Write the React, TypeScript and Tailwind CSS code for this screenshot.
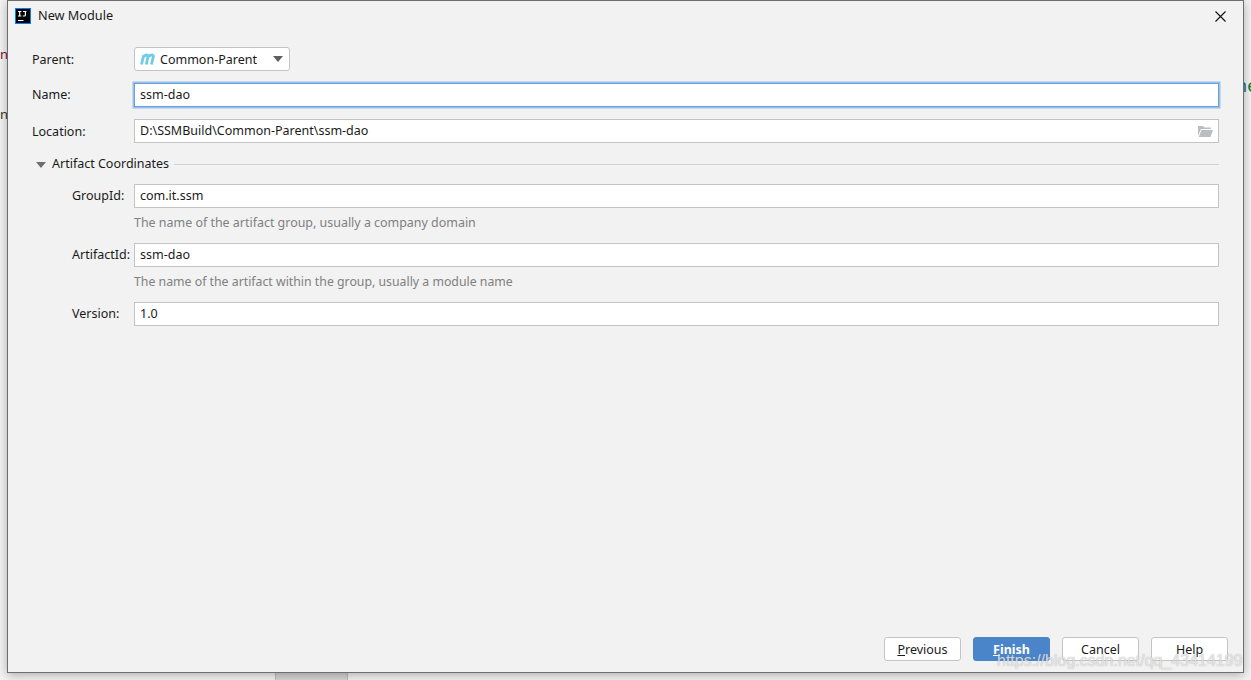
const font = "font-['Noto_Sans','Open_Sans',sans-serif]";

const Field = ({ value, children }: { value: string; children?: React.ReactNode }) => (
  <div className="flex h-6 flex-1 items-center justify-between border border-[#c4c4c4] bg-white pl-[5px] pr-[5px] text-[#1a1a1a]">
    <span>{value}</span>
    {children}
  </div>
);

const Button = ({ label, mnemonic, primary }: { label: string; mnemonic?: string; primary?: boolean }) => (
  <button
    className={
      primary
        ? "h-6 w-[77px] rounded-[3px] border border-[#4a85c5] bg-[#4a85c9] pt-[2px] text-[12.5px] font-bold text-white"
        : "h-6 w-[77px] rounded-[3px] border border-[#c4c4c4] bg-white pt-[2px] text-[12.5px] text-[#1a1a1a]"
    }
  >
    {mnemonic && <span className="underline">{mnemonic}</span>}
    {label}
  </button>
);

export default function App() {
  return (
    <div className={`relative h-[680px] w-[1251px] overflow-hidden bg-[#f4f4f4] ${font}`}>
      {/* IDE peeking out behind the dialog */}
      <span className="absolute left-0 top-[45px] text-[13px] text-[#7a1040]">n</span>
      <span className="absolute left-0 top-[105px] text-[13px] text-[#333]">n</span>
      <span className="absolute left-[1236px] top-[72px] text-[18px] text-[#0b7a2a]">
        <span className="text-[#1f6f8f]">n</span>e
      </span>
      <div className="absolute left-[275px] top-[672px] h-2 w-[73px] border-x border-[#bdbdbd] bg-[#d6d6d6]" />

      <div className="relative ml-[7px] flex h-[673px] w-[1237px] flex-col border border-[#6e6e6e] bg-[#f2f2f2] shadow-[0_2px_10px_rgba(0,0,0,0.3)]">
        <div className="flex h-[30px] items-center pl-[7px] pr-[17px]">
          <svg width="16" height="16" viewBox="0 0 16 16" className="shrink-0">
            <rect x="0" y="0" width="16" height="16" fill="#087cfa" />
            <rect x="1" y="1" width="14" height="14" fill="#000" />
            <path d="M3 3.5h3.4M4.7 3.5v4.5M3 8h3.4M8 3.5h3.4M10.4 3.5v3.5q0 1-1 1H7.8M3 12.5h5.5" stroke="#fff" strokeWidth="1.2" fill="none" />
          </svg>
          <span className="ml-[7px] text-[12.7px] text-[#1a1a1a]">New Module</span>
          <svg width="11" height="11" viewBox="0 0 11 11" className="ml-auto">
            <path d="M.5.5l10 10M10.5.5l-10 10" stroke="#111" strokeWidth="1.1" />
          </svg>
        </div>

        <div className="flex flex-1 flex-col pl-[24px] pr-[24px] pt-[16px] text-[12.5px] text-[#1a1a1a]">
          <div className="flex h-6 items-center">
            <span className="w-[102px] pt-[2px]">Parent:</span>
            <div className="flex h-6 w-[156px] items-center rounded-[3px] border border-[#c4c4c4] bg-white pl-[5px] pr-[5px]">
              <svg width="16" height="14" viewBox="0 0 16 14" className="shrink-0">
                <path d="M1.5 12.5L3.8 3M3.6 4.5Q7.5 1.5 8 4.5L6.3 12.5M8.2 4.5Q13 1.5 13.4 4.5L11.4 12.5" stroke="#6fcbe8" strokeWidth="2.8" fill="none" />
              </svg>
              <span className="ml-[4px] flex-1 pt-[2px]">Common-Parent</span>
              <span className="mr-[1px] h-0 w-0 border-x-[5px] border-t-[6px] border-x-transparent border-t-[#5f5f5f]" />
            </div>
          </div>

          <div className="mt-3 flex h-6 items-center">
            <span className="w-[102px]">Name:</span>
            <div className="flex h-6 flex-1 items-center border border-[#6f9fd8] bg-white pl-[5px] shadow-[0_0_0_1.5px_#97c0ec]">ssm-dao</div>
          </div>

          <div className="mt-3 flex h-6 items-center">
            <span className="w-[102px] pt-[2px]">Location:</span>
            <Field value="D:\SSMBuild\Common-Parent\ssm-dao">
              <svg width="15" height="12" viewBox="0 0 15 12">
                <path d="M0 1h5l1.5 1.5H13V4H3L0 11z" fill="#b9bec2" />
                <path d="M3.5 5H15l-2.5 7H.8z" fill="#b9bec2" />
              </svg>
            </Field>
          </div>

          <div className="mt-[13px] flex h-[17px] items-center">
            <span className="ml-[4px] h-0 w-0 border-x-[5px] border-t-[6px] border-x-transparent border-t-[#6e6e6e]" />
            <span className="ml-[6px]">Artifact Coordinates</span>
            <span className="ml-[5px] h-px flex-1 bg-[#d1d1d1]" />
          </div>

          <div className="mt-[11px] flex h-6 items-center">
            <span className="w-[102px] pl-[40px]">GroupId:</span>
            <Field value="com.it.ssm" />
          </div>
          <div className="mt-[6px] h-[18px] pl-[102px] text-[12.45px] leading-[18px] text-[#808080]">The name of the artifact group, usually a company domain</div>

          <div className="mt-[11px] flex h-6 items-center">
            <span className="w-[102px] pl-[40px]">ArtifactId:</span>
            <Field value="ssm-dao" />
          </div>
          <div className="mt-[6px] h-[18px] pl-[102px] text-[12.3px] leading-[18px] text-[#808080]">The name of the artifact within the group, usually a module name</div>

          <div className="mt-[11px] flex h-6 items-center">
            <span className="w-[102px] pl-[40px]">Version:</span>
            <Field value="1.0" />
          </div>

          <div className="mt-auto mb-[11px] mr-[-9px] flex justify-end gap-3">
            <Button label="revious" mnemonic="P" />
            <Button label="inish" mnemonic="F" primary />
            <Button label="Cancel" />
            <Button label="Help" />
          </div>
        </div>
      </div>

      {/* csdn watermark */}
      <span className="absolute left-[997px] top-[652px] font-['Liberation_Sans',sans-serif] text-[16px] leading-[18px] text-white/70 [text-shadow:0_0_1px_rgba(120,120,120,0.7)]">
        https://blog.csdn.net/qq_43414199
      </span>
    </div>
  );
}
